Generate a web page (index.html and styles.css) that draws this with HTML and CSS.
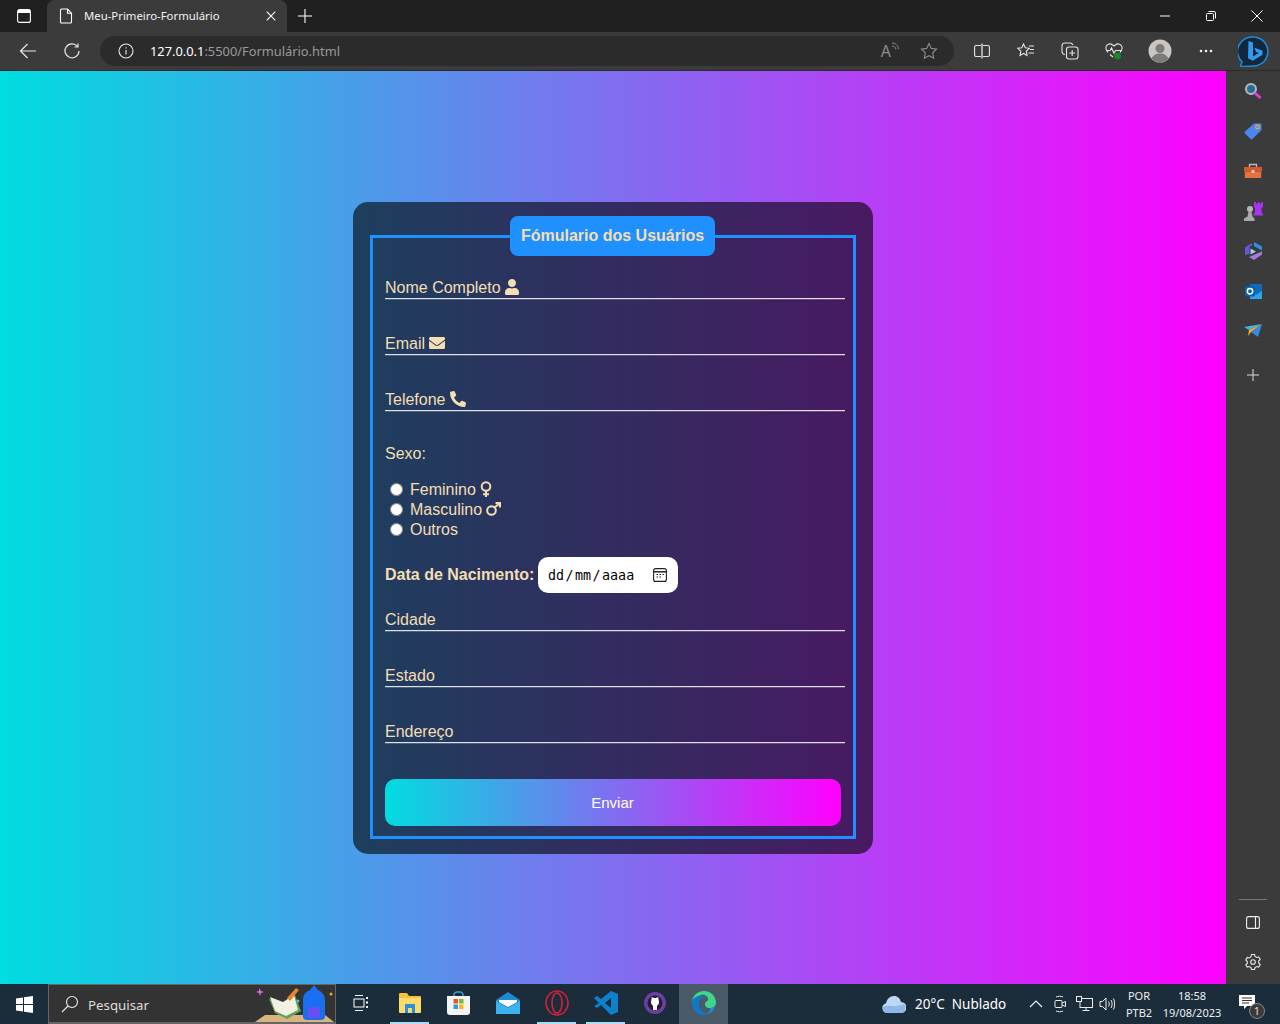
FILE: index.html
```html
<!DOCTYPE html>
<html lang="pt-BR">
<head>
<meta charset="utf-8">
<title>Meu-Primeiro-Formulário</title>
<link rel="stylesheet" href="styles.css">
</head>
<body>
<div class="tabstrip">
  <div class="slot-window"><svg width="16" height="16" viewBox="0 0 16 16" fill="none" stroke="#fff" stroke-width="1.1"><rect x="1.6" y="1.6" width="12.8" height="12.8" rx="2"/><rect x="2" y="2" width="12" height="3" fill="#fff" stroke="none"/></svg></div>
  <div class="tab">
    <svg class="tab-icon" width="14" height="16" viewBox="0 0 14 16" fill="none" stroke="#fff" stroke-width="1.1"><path d="M2.500 1h6l4 4.200v8.800a1 1 0 0 1-1 1h-9a1 1 0 0 1-1-1V2a1 1 0 0 1 1-1zM8.500 1v4.200h4"/></svg>
    <span class="tab-title">Meu-Primeiro-Formulário</span>
    <svg width="10" height="10" viewBox="0 0 10 10" stroke="#fff" stroke-width="1.1"><path d="M.7.7l8.600 8.600M9.300.7L.7 9.300"/></svg>
  </div>
  <div class="newtab"><svg width="14" height="14" viewBox="0 0 14 14" stroke="#fff" stroke-width="1.1"><path d="M7 0v14M0 7h14"/></svg></div>
  <div class="winctrls">
    <div class="winctrl"><svg width="10" height="10" viewBox="0 0 10 10" stroke="#fff" stroke-width="1"><path d="M0 5h10"/></svg></div>
    <div class="winctrl"><svg width="10" height="10" viewBox="0 0 10 10" fill="none" stroke="#fff" stroke-width="1"><rect x=".5" y="2.500" width="7" height="7" rx="1"/><path d="M2.500 .5h5.500a1.500 1.500 0 0 1 1.500 1.500v5.500"/></svg></div>
    <div class="winctrl"><svg width="12" height="12" viewBox="0 0 12 12" stroke="#fff" stroke-width="1"><path d="M.5.5l11 11M11.500.5l-11 11"/></svg></div>
  </div>
</div>
<div class="toolbar">
  <div class="tool"><svg width="18" height="16" viewBox="0 0 18 16" fill="none" stroke="#e8e8e8" stroke-width="1.2"><path d="M8.500 1L1.500 8l7 7M1.500 8H17"/></svg></div>
  <div class="tool"><svg width="16" height="16" viewBox="0 0 16 16" fill="none" stroke="#e8e8e8" stroke-width="1.2"><path d="M13.500 3.500A7 7 0 1 0 15 8M14 .5v3.500h-3.500"/></svg></div>
  <div class="addr">
    <svg class="addr-info" width="16" height="16" viewBox="0 0 16 16" fill="none" stroke="#e8e8e8" stroke-width="1.1"><circle cx="8" cy="8" r="7"/><path d="M8 7v4.500M8 4.300v1.200"/></svg>
    <span class="url"><span class="url-host">127.0.0.1</span>:5500/Formulário.html</span>
    <span class="addr-read">A<svg width="8" height="9" viewBox="0 0 8 9" fill="none" stroke="#8c8c8c"><path d="M1 1c3 0 6 2 6.500 6M1 4c2 0 3.500 1 4 3.500"/></svg></span>
    <svg width="18" height="18" viewBox="0 0 18 18" fill="none" stroke="#8c8c8c" stroke-width="1.1"><path d="M9 1.500l2.300 4.900 5.200.7-3.800 3.700 1 5.400L9 13.700l-4.700 2.500 1-5.400L1.500 7.100l5.200-.7z"/></svg>
  </div>
  <div class="tool tool-first"><svg width="16" height="16" viewBox="0 0 16 16" fill="none" stroke="#e4e4e4" stroke-width="1.1"><rect x=".6" y="2.500" width="14.800" height="11" rx="1.500"/><path d="M8 .5v15" stroke-width="2" stroke="#aaa"/></svg></div>
  <div class="tool"><svg width="18" height="16" viewBox="0 0 18 16" fill="none" stroke="#e4e4e4" stroke-width="1.1"><path d="M6.500 1l1.800 3.800 4 .5-3 2.900.8 4.300-3.600-2L3 12.500l.8-4.300-3-2.900 4-.5zM12 3h5M13 6.500h4M11.500 10H17"/></svg></div>
  <div class="tool"><svg width="18" height="18" viewBox="0 0 18 18" fill="none" stroke="#e4e4e4" stroke-width="1.1"><path d="M4 12.500A3 3 0 0 1 1 10V4a3 3 0 0 1 3-3h5c1.500 0 2.500 1 3 2"/><rect x="5.500" y="5" width="11.500" height="12" rx="2.500"/><path d="M11.200 8v6M8.200 11h6"/></svg></div>
  <div class="tool"><svg width="18" height="18" viewBox="0 0 18 18"><path d="M3 10.500C1 8.500.5 7.500 1 5c.5-2.500 4-4 6-2.500L9 4l2-1.500c2-1.500 5.500 0 6 2.500.5 2.500 0 3.500-2 5.500M1 8.500h4l1.500-2.500L9 11l1.500-2.500H17M5 12.500l3 2.500" fill="none" stroke="#e4e4e4" stroke-width="1.1"/><circle cx="12.500" cy="14" r="3.500" fill="#13882e"/></svg></div>
  <div class="tool tool-profile"><svg width="24" height="24" viewBox="0 0 24 24"><circle cx="12" cy="12" r="11.500" fill="#c9c6c2"/><circle cx="12" cy="9.500" r="4.500" fill="#7d7a77"/><path d="M3.500 19.500c2-4 5-5 8.500-5s6.500 1 8.500 5a11.500 11.500 0 0 1-17 0z" fill="#7d7a77"/></svg></div>
  <div class="tool"><svg width="14" height="4" viewBox="0 0 14 4" fill="#f0f0f0"><circle cx="2" cy="2" r="1.300"/><circle cx="7" cy="2" r="1.300"/><circle cx="12" cy="2" r="1.300"/></svg></div>
  <div class="tool tool-bing"><svg width="31" height="31" viewBox="0 0 31 31" fill="none"><path d="M15.500 1a14.500 14.500 0 0 1 4 28.400c-4 .6-9 .8-15 1.300l-2-.7 1.600-4A14.500 14.500 0 0 1 15.500 1z" stroke="#1a8fd8" stroke-width="1.500" fill="#14283c"/><path d="M10.500 5l4.500 1.600v14l6-3.500-3-1.400-1.500-4 8 3v4l-9.800 6-4.700-2.500z" fill="#2f9bf0"/></svg></div>
</div>
<div class="middle">
  <main class="viewport">
    <form class="card">
      <fieldset class="box">
        <legend class="title">Fómulario dos Usuários</legend>
        <label class="field field-first">Nome Completo <svg class="fa" width="14" height="16" viewBox="0 0 448 512"><path d="M224 256c70.700 0 128-57.300 128-128S294.700 0 224 0 96 57.300 96 128s57.300 128 128 128zm89.600 32h-16.700c-22.200 10.200-46.900 16-72.900 16s-50.600-5.800-72.900-16h-16.700C60.200 288 0 348.200 0 422.400V464c0 26.500 21.500 48 48 48h352c26.500 0 48-21.500 48-48v-41.600c0-74.200-60.200-134.400-134.400-134.400z"/></svg></label>
        <label class="field">Email <svg class="fa" width="16" height="16" viewBox="0 0 512 512"><path d="M502.300 190.800c3.900-3.100 9.700-.2 9.700 4.700V400c0 26.500-21.500 48-48 48H48c-26.500 0-48-21.500-48-48V195.600c0-5 5.700-7.800 9.700-4.700 22.400 17.400 52.100 39.500 154.100 113.600 21.100 15.400 56.700 47.800 92.200 47.600 35.700.3 72-32.800 92.300-47.600 102-74.100 131.600-96.300 154-113.700zM256 320c23.200.4 56.600-29.200 73.400-41.400 132.700-96.300 142.800-104.700 173.400-128.700 5.800-4.500 9.200-11.500 9.200-18.900v-19c0-26.500-21.500-48-48-48H48C21.500 64 0 85.500 0 112v19c0 7.400 3.400 14.300 9.200 18.900 30.600 23.900 40.700 32.400 173.400 128.700 16.800 12.200 50.200 41.800 73.400 41.400z"/></svg></label>
        <label class="field">Telefone <svg class="fa fa-flip" width="16" height="16" viewBox="0 0 512 512"><path d="M493.400 24.600l-104-24c-11.300-2.600-22.900 3.300-27.500 13.900l-48 112c-4.200 9.800-1.400 21.300 6.900 28l60.600 49.600c-36 76.700-98.900 140.500-177.200 177.200l-49.600-60.600c-6.800-8.300-18.200-11.100-28-6.900l-112 48C3.900 366.500-2 378.100.6 389.400l24 104C27.100 504.200 36.700 512 48 512c256.100 0 464-207.500 464-464 0-11.200-7.700-20.900-18.600-23.400z"/></svg></label>
        <p class="sexo">Sexo:</p>
        <div class="radios">
          <label class="radio"><input type="radio" name="sexo"><span>Feminino</span><svg class="gender" width="12" height="16" viewBox="0 0 12 16" fill="none" stroke="#f5deb3" stroke-width="2"><circle cx="6" cy="5.500" r="4.300"/><path d="M6 10v6M3 13.200h6"/></svg></label>
          <label class="radio"><input type="radio" name="sexo"><span>Masculino</span><svg class="gender" width="15" height="14" viewBox="0 0 15 14" fill="none" stroke="#f5deb3" stroke-width="2"><circle cx="5.500" cy="8.500" r="4.300"/><path d="M8.500 5.500L14 .9M9.500 1H14v4.500"/></svg></label>
          <label class="radio"><input type="radio" name="sexo"><span>Outros</span></label>
        </div>
        <div class="date-row">
          <span class="date-label">Data de Nacimento:</span>
          <div class="date-input">
            <span class="date-text">dd<i>/</i>mm<i>/</i>aaaa</span>
            <svg width="14" height="14" viewBox="0 0 14 14" fill="none" stroke="#222" stroke-width="1.100"><rect x=".6" y=".6" width="12.800" height="12.800" rx="2"/><path d="M.6 3.800h12.800" stroke-width="1.500"/><path d="M3.500 6.500h1.500M6.500 6.500h1.500M9.500 6.500h1.500M3.500 9h1.500M6.500 9h1.500"/></svg>
          </div>
        </div>
        <label class="field field-city">Cidade</label>
        <label class="field">Estado</label>
        <label class="field">Endereço</label>
        <button class="send" type="button">Enviar</button>
      </fieldset>
    </form>
  </main>
  <aside class="sidebar">
    <div class="side"><svg width="18" height="18" viewBox="0 0 18 18"><circle cx="7" cy="7" r="5" fill="#1f6d9c" stroke="#b9b9b9" stroke-width="2"/><path d="M11 11l5.500 5" stroke="#e238e2" stroke-width="3"/></svg></div>
    <div class="side"><svg width="18" height="18" viewBox="0 0 18 18"><path d="M10 1.500h6.500a1 1 0 0 1 1 1V8L8.500 17a1.500 1.500 0 0 1-2 0L1 11.500a1.500 1.500 0 0 1 0-2z" fill="#4d84f0"/><circle cx="13.500" cy="5" r="1.800" fill="#4d84f0" stroke="#f1b21d" stroke-width="1.200"/></svg></div>
    <div class="side"><svg width="18" height="16" viewBox="0 0 18 16"><path d="M5.500 4V1.500h7V4" fill="none" stroke="#b9b9b9" stroke-width="1.400"/><rect y="4" width="18" height="4.500" fill="#d8572c"/><rect x=".8" y="8.500" width="16.400" height="6.500" fill="#e8703f"/><rect x="7.500" y="7" width="3" height="3" fill="#ccc"/></svg></div>
    <div class="side"><svg width="19" height="19" viewBox="0 0 19 19"><path d="M10 0h2v1.500h2V0h1.500v1.500h2V0h1.500v5l-1.500 1v4.500l1.500 1.500v1.500H9.500V12l1.500-1.500V6L10 5z" fill="#a933f0"/><circle cx="6" cy="7" r="3" fill="#b8b8b8"/><path d="M4.500 9.500h3l1 5 2 2V19H0v-2.500l3.500-2z" fill="#a9a9a9"/></svg></div>
    <div class="side"><svg width="17" height="18" viewBox="0 0 17 18"><path d="M9 0l8 4.500v4L11.500 5.500 9 4z" fill="#2f8fe0"/><path d="M0 5.500L6 1.500l2 1-3.500 2.500v7L0 13z" fill="#6a55d8"/><path d="M17 9.500v3L9 18l-5-3 8-3.500z" fill="#a87be0"/><path d="M5.500 6.500l5.500 3-5.500 3z" fill="#9ad0f0"/></svg></div>
    <div class="side"><svg width="17" height="17" viewBox="0 0 17 17"><rect x="5" y="1" width="12" height="15" rx="1" fill="#0f6cbd"/><path d="M5 8l6 4 6-4v8H5z" fill="#28a8ea"/><rect y="3" width="10" height="10.500" rx="1.500" fill="#0a5fb0"/><circle cx="5" cy="8.200" r="2.700" fill="none" stroke="#fff" stroke-width="1.500"/></svg></div>
    <div class="side"><svg width="18" height="14" viewBox="0 0 18 14"><path d="M18 0L0 3l5 3z" fill="#41b7f2"/><path d="M18 0L5 6l-1 6 3-4z" fill="#f5b21e"/><path d="M18 0L7 8l7 5z" fill="#3a87e6"/></svg></div>
    <div class="side side-add"><svg width="12" height="12" viewBox="0 0 12 12" stroke="#dcdcdc" stroke-width="1"><path d="M6 0v12M0 6h12"/></svg></div>
    <div class="side-bottom">
      <div class="side-rule"></div>
      <div class="side"><svg width="14" height="13" viewBox="0 0 14 13" fill="none" stroke="#f0f0f0" stroke-width="1.100"><rect x=".6" y=".6" width="12.800" height="11.800" rx="2"/><path d="M9.500 1v11"/></svg></div>
      <div class="side"><svg width="16" height="16" viewBox="0 0 16 16" fill="none" stroke="#e8e8e8" stroke-width="1.100"><path d="M6.500 1h3l.5 2 1.700 1 2-.6 1.500 2.600-1.500 1.500v2l1.500 1.500-1.500 2.600-2-.6-1.700 1-.5 2h-3l-.5-2-1.700-1-2 .6L.8 11.500 2.300 10V8L.8 6.500 2.300 3.900l2 .6L6 3.500z" transform="translate(0 -.5)"/><circle cx="8" cy="8" r="2.300"/></svg></div>
    </div>
  </aside>
</div>
<footer class="taskbar">
  <div class="start"><svg width="17" height="17" viewBox="0 0 17 17" fill="#fff"><path d="M0 2.500L7 1.500v6.500H0zM8 1.300L17 0v8H8zM0 9h7v6.500L0 14.500zM8 9h9v8L8 15.700z"/></svg></div>
  <div class="search">
    <svg width="18" height="18" viewBox="0 0 18 18" fill="none" stroke="#eee" stroke-width="1.100"><circle cx="11" cy="7" r="5.500"/><path d="M7 11l-6 6"/></svg>
    <span class="search-text">Pesquisar</span>
    <svg class="search-art" width="80" height="38" viewBox="0 0 80 38"><path d="M10 31h60l9 7H0z" fill="#d9b47e"/><path d="M14 15l14 4 12-8 6 16-14 8-12-6z" fill="#5ea35a"/><path d="M15 13l13 5 11-7 4 15-12 6-11-5z" fill="#f3f1e4"/><path d="M32 14l9-10 3 2-9 11z" fill="#e8832a"/><path d="M4 4l2 3 3 1-3 1-1 3-1-3-3-1 3-1z" fill="#d86be0"/><path d="M48 33V16c0-6 4-9 7-10l4-5 4 5c4 2 7 5 7 10v17c0 2-2 3-4 3H52c-2 0-4-1-4-3z" fill="#1a6ff0"/><rect x="53" y="23" width="12" height="11" rx="3" fill="#6a4ff0"/><circle cx="76" cy="10" r="1.500" fill="#e8b030"/><circle cx="43" cy="17" r="1.500" fill="#48c0c0"/></svg>
  </div>
  <div class="task"><svg width="16" height="16" viewBox="0 0 16 16" fill="none" stroke="#fff" stroke-width="1"><path d="M2 .5h8M2 15.500h8"/><rect x="1" y="4" width="10" height="8"/><path d="M14 2v2M14 6.500v2M14 11v2" stroke-width="2"/></svg></div>
  <div class="task task-on"><svg width="22" height="20" viewBox="0 0 22 20"><path d="M0 1a1 1 0 0 1 1-1h7l2 3h11a1 1 0 0 1 1 1v2H0z" fill="#f5c33b"/><path d="M0 5h22v14a1 1 0 0 1-1 1H1a1 1 0 0 1-1-1z" fill="#fbdb6a"/><path d="M6 20v-8a1 1 0 0 1 1-1h8a1 1 0 0 1 1 1v8h-3v-5H9v5z" fill="#2b8fd9"/></svg></div>
  <div class="task"><svg width="23" height="24" viewBox="0 0 23 24"><path d="M7 5V3a3 3 0 0 1 3-2h3a3 3 0 0 1 3 2v2" fill="none" stroke="#2ba6df" stroke-width="1.500"/><path d="M0 5h23v16a3 3 0 0 1-3 3H3a3 3 0 0 1-3-3z" fill="#f4f4f4"/><rect x="6.500" y="8" width="4.500" height="4.500" fill="#e8532b"/><rect x="12" y="8" width="4.500" height="4.500" fill="#7eb92f"/><rect x="6.500" y="13.500" width="4.500" height="4.500" fill="#2a9fe0"/><rect x="12" y="13.500" width="4.500" height="4.500" fill="#f5b91d"/></svg></div>
  <div class="task"><svg width="24" height="22" viewBox="0 0 24 22"><path d="M0 8L12 0l12 8v14H0z" fill="#1f8ad0"/><path d="M0 9l12 7 12-7v13H0z" fill="#3cb2ee"/><path d="M3 8h18v2l-9 5-9-5z" fill="#fff"/></svg></div>
  <div class="task task-on"><svg width="24" height="26" viewBox="0 0 24 26" fill="none" stroke="#d0203a" stroke-width="1.600"><ellipse cx="12" cy="13" rx="11" ry="12"/><ellipse cx="12" cy="13" rx="5" ry="10"/></svg></div>
  <div class="task task-on"><svg width="24" height="24" viewBox="0 0 24 24"><path d="M17 0l7 3v18l-7 3-10-10-4 3-3-2 5-3L0 7l3-2 4 3z" fill="#0f80cc"/><path d="M17 7l-6 5 6 5z" fill="#1b2c3a"/></svg></div>
  <div class="task"><svg width="22" height="22" viewBox="0 0 22 22"><circle cx="11" cy="11" r="11" fill="#6b3fa0"/><circle cx="11" cy="11" r="7.500" fill="#2a1a3c"/><circle cx="11" cy="10" r="4" fill="#fff"/><path d="M7.500 8l.3-3 2.200 1h2l2.200-1 .3 3zM9 13h4v5H9z" fill="#fff"/></svg></div>
  <div class="task task-edge"><svg width="24" height="24" viewBox="0 0 24 24"><path d="M12 0c7 0 12 5 12 12 0 3-3 5-6 5-4 0-5-2-5-4 0-3 3-2 3-5S12 3 9 4 0 8 0 12C0 5 5 0 12 0z" fill="#3dd68c"/><path d="M0 12c0-4 4-7 8-7 3 0 5 1 6 2-2-1-7 0-7 6 0 5 4 10 10 9-2 1-3 2-5 2C5 24 0 19 0 12z" fill="#1377c9"/><path d="M18 17c2 0 4-1 5-2-1 5-5 8-8 8 2-1 3-3 3-6z" fill="#1a8fe0"/></svg></div>
  <div class="tray">
    <svg class="cloud" width="24" height="17" viewBox="0 0 24 17"><path d="M5 17a5 5 0 0 1-1-9.800C5 3 8 0 12 0c4 0 6 2.500 7 6a5.500 5.500 0 0 1 0 11z" fill="#bcd8f4"/><path d="M1 11c5-3 10 0 14-1s6-2 8-1c1 3 0 8-4 8H5c-2 0-4-2-4-6z" fill="#8fb8e4"/></svg>
    <span class="weather">20°C&nbsp; Nublado</span>
    <svg class="caret" width="14" height="8" viewBox="0 0 14 8" fill="none" stroke="#eee" stroke-width="1.200"><path d="M1 7l6-6 6 6"/></svg>
    <svg class="tray-ic" width="14" height="18" viewBox="0 0 14 18" fill="none" stroke="#eee" stroke-width="1"><rect x="2" y="5.500" width="7" height="7" rx="1"/><path d="M9 8l3.500-1.500v5L9 10M3 2c2-1 5-1 7 0M3 16c2 1 5 1 7 0"/></svg>
    <svg class="tray-ic tray-net" width="17" height="16" viewBox="0 0 17 16" fill="none" stroke="#eee" stroke-width="1"><rect x="4" y="2.500" width="12.500" height="9"/><rect x=".5" y=".5" width="5" height="5" fill="#1b2c3a"/><path d="M10 11.500v3M6.500 14.500h7"/></svg>
    <svg class="tray-ic tray-vol" width="16" height="16" viewBox="0 0 16 16" fill="none" stroke="#eee" stroke-width="1"><path d="M1 5.500h2.500L7 2v12l-3.500-3.500H1zM9.500 5.500c1 1.500 1 3.500 0 5M12 4c1.500 2.500 1.500 5.500 0 8M14.500 2.500c1.500 3 1.500 8 0 11" /></svg>
    <div class="tray-col tray-lang"><span>POR</span><span>PTB2</span></div>
    <div class="tray-col tray-clock"><span>18:58</span><span>19/08/2023</span></div>
    <div class="notify">
      <svg width="16" height="14" viewBox="0 0 16 14"><path d="M0 0h16v11H8l-3 3v-3H0z" fill="#fff"/><path d="M3 3h10M3 5.500h10M3 8h7" stroke="#333"/></svg>
      <span class="badge">1</span>
    </div>
  </div>
</footer>
</body>
</html>
```
FILE: styles.css
```css
* { box-sizing: border-box; }
html, body { height: 100%; }
body {
  margin: 0;
  height: 1024px;
  overflow: hidden;
  display: flex;
  flex-direction: column;
  background: #3b3b3b;
  font-family: "Noto Sans", "Liberation Sans", sans-serif;
  color: #fff;
}

/* tab strip */
.tabstrip {
  height: 32px;
  flex: none;
  display: flex;
  align-items: flex-end;
  background: #202020;
}
.slot-window {
  width: 47px;
  height: 32px;
  display: flex;
  align-items: center;
  justify-content: center;
}
.tab {
  width: 240px;
  height: 32px;
  display: flex;
  align-items: center;
  padding: 0 11px 0 12px;
  background: #3b3b3b;
  border-radius: 8px 8px 0 0;
}
.tab-icon { margin-right: 11px; flex: none; }
.tab-title { flex: 1; padding-bottom: 1px; font-size: 11.35px; color: #f2f2f2; }
.newtab {
  width: 36px;
  height: 32px;
  display: flex;
  align-items: center;
  justify-content: center;
}
.winctrls { margin-left: auto; display: flex; padding-right: 0; }
.winctrl {
  width: 46px;
  height: 32px;
  display: flex;
  align-items: center;
  justify-content: center;
}

/* toolbar */
.toolbar {
  height: 39px;
  flex: none;
  display: flex;
  align-items: flex-start;
  padding: 4px 0 0 6px;
  background: #3b3b3b;
  border-bottom: 1px solid #2a2a2a;
}
.tool {
  width: 44px;
  height: 30px;
  flex: none;
  display: flex;
  align-items: center;
  justify-content: center;
}
.tool-first { margin-left: 6px; }
.tool-profile { width: 46px; margin-left: 1px; margin-right: 1px; }
.tool-bing { margin-left: 3px; }
.addr {
  width: 854px;
  height: 30px;
  margin-left: 6px;
  flex: none;
  display: flex;
  align-items: center;
  padding: 0 16px 0 18px;
  background: #2b2b2b;
  border-radius: 15px;
}
.addr-info { margin-right: 16px; flex: none; }
.url { flex: 1; font-size: 12.85px; color: #9a9a9a; }
.url-host { color: #fff; }
.addr-read {
  display: flex;
  align-items: flex-start;
  margin-right: 21px;
  font-size: 16px;
  line-height: 18px;
  color: #8c8c8c;
}

/* page */
.middle { flex: 1; min-height: 0; display: flex; }
.viewport {
  width: 1226px;
  flex: none;
  display: flex;
  align-items: center;
  justify-content: center;
  padding-top: 1px;
  background: linear-gradient(to right, #00dde0, #ff00ff);
  font-family: "Liberation Sans", Arial, sans-serif;
  color: #f5deb3;
}
.card {
  width: 520px;
  height: 652px;
  padding: 14px 17px 15px;
  background: rgba(0, 0, 0, 0.6);
  border-radius: 15px;
}
.box {
  margin: 0;
  height: 623px;
  padding: 0 12px 10px;
  border: 3px solid #1e90ff;
  min-width: 0;
}
.title {
  margin: 0 0 0 125px;
  width: 205px;
  height: 40px;
  padding: 0;
  display: flex;
  align-items: center;
  justify-content: center;
  background: #1e90ff;
  border-radius: 8px;
  font-size: 16px;
  font-weight: 700;
}
.field {
  display: block;
  width: 460px;
  height: 24px;
  margin-top: 32px;
  font-size: 16px;
  line-height: 25px;
  border-bottom: 1px solid rgba(255, 255, 255, 0.85);
  box-shadow: 0 1px 0 rgba(255, 255, 255, 0.2);
}
.field-first { margin-top: 19px; }
.field-city { margin-top: 14px; }
.fa { fill: #f5deb3; vertical-align: -2px; }
.fa-flip { transform: scaleX(-1); }
.sexo { margin: 32px 0 0; font-size: 16px; line-height: 22px; height: 20px; }
.radios { margin-top: 16px; }
.radio {
  display: flex;
  align-items: center;
  height: 20px;
  font-size: 16px;
}
.radio span { padding-top: 1px; }
.radio input { width: 13px; height: 13px; margin: 0 7px 0 5px; flex: none; }
.gender { margin-left: 4px; }
.date-row { display: flex; align-items: center; height: 36px; margin-top: 18px; }
.date-label { font-size: 16px; font-weight: 700; margin-right: 4px; }
.date-input {
  width: 140px;
  height: 36px;
  display: flex;
  align-items: center;
  justify-content: space-between;
  padding: 0 11px 0 9.5px;
  background: #fff;
  border-radius: 10px;
}
.date-text {
  font-family: "DejaVu Sans Mono", "Liberation Mono", monospace;
  font-size: 13.33px;
  color: #000;
}
.date-text i { font-style: normal; margin: 0 1.5px; }
.send {
  display: block;
  width: 456px;
  height: 47px;
  margin-top: 36px;
  padding: 0 1px 0 0;
  border: 0;
  border-radius: 10px;
  background: linear-gradient(to right, #00dde0, #ff00ff);
  color: #fff;
  font-family: "Liberation Sans", Arial, sans-serif;
  font-size: 15px;
}

/* sidebar */
.sidebar {
  flex: 1;
  display: flex;
  flex-direction: column;
  align-items: center;
  background: #3b3b3b;
}
.side {
  width: 54px;
  height: 40px;
  flex: none;
  display: flex;
  align-items: center;
  justify-content: center;
}
.side-add { margin-top: 4px; }
.side-bottom {
  margin-top: auto;
  display: flex;
  flex-direction: column;
  align-items: center;
  padding-bottom: 2px;
}
.side-rule { width: 28px; height: 1px; margin-bottom: 2px; background: #777; }

/* taskbar */
.taskbar {
  height: 40px;
  flex: none;
  display: flex;
  align-items: center;
  background: #1b2c3a;
}
.start {
  width: 48px;
  height: 40px;
  display: flex;
  align-items: center;
  justify-content: center;
}
.search {
  width: 288px;
  height: 40px;
  display: flex;
  align-items: center;
  padding-left: 12px;
  background: #333;
  border: 1px solid #666;
  border-bottom-width: 2px;
}
.search-text { flex: 1; margin-left: 9px; padding-top: 2px; font-size: 13.3px; color: #ddd; }
.search-art { align-self: flex-end; flex: none; }
.task {
  width: 49px;
  height: 40px;
  flex: none;
  display: flex;
  align-items: center;
  justify-content: center;
  padding-bottom: 2px;
}
.task-on { background: linear-gradient(#a9dcf5, #a9dcf5) center bottom / 39px 2px no-repeat; }
.task-edge { background: #4a5a66; }
.tray {
  flex: 1;
  height: 40px;
  display: flex;
  align-items: center;
  padding-left: 154px;
  font-size: 13.5px;
}
.cloud { flex: none; margin-right: 9px; }
.weather { width: 114px; color: #fff; white-space: nowrap; }
.caret { flex: none; margin-right: 10px; }
.tray-ic { flex: none; }
.tray-net { margin-left: 9px; }
.tray-vol { margin-left: 6px; }
.tray-col {
  display: flex;
  flex-direction: column;
  align-items: center;
  font-size: 11px;
  line-height: 17px;
  color: #f0f0f0;
}
.tray-lang { width: 44px; margin-left: 2px; }
.tray-clock { width: 62px; }
.notify {
  width: 24px;
  height: 24px;
  margin-left: 12px;
  position: relative;
  display: flex;
  justify-content: center;
  padding-top: 3px;
}
.badge {
  position: absolute;
  right: -6px;
  bottom: -3px;
  width: 16px;
  height: 16px;
  border-radius: 50%;
  background: #3a3a3a;
  border: 1px solid #888;
  font-size: 11px;
  line-height: 14px;
  text-align: center;
  color: #ddd;
}
```
